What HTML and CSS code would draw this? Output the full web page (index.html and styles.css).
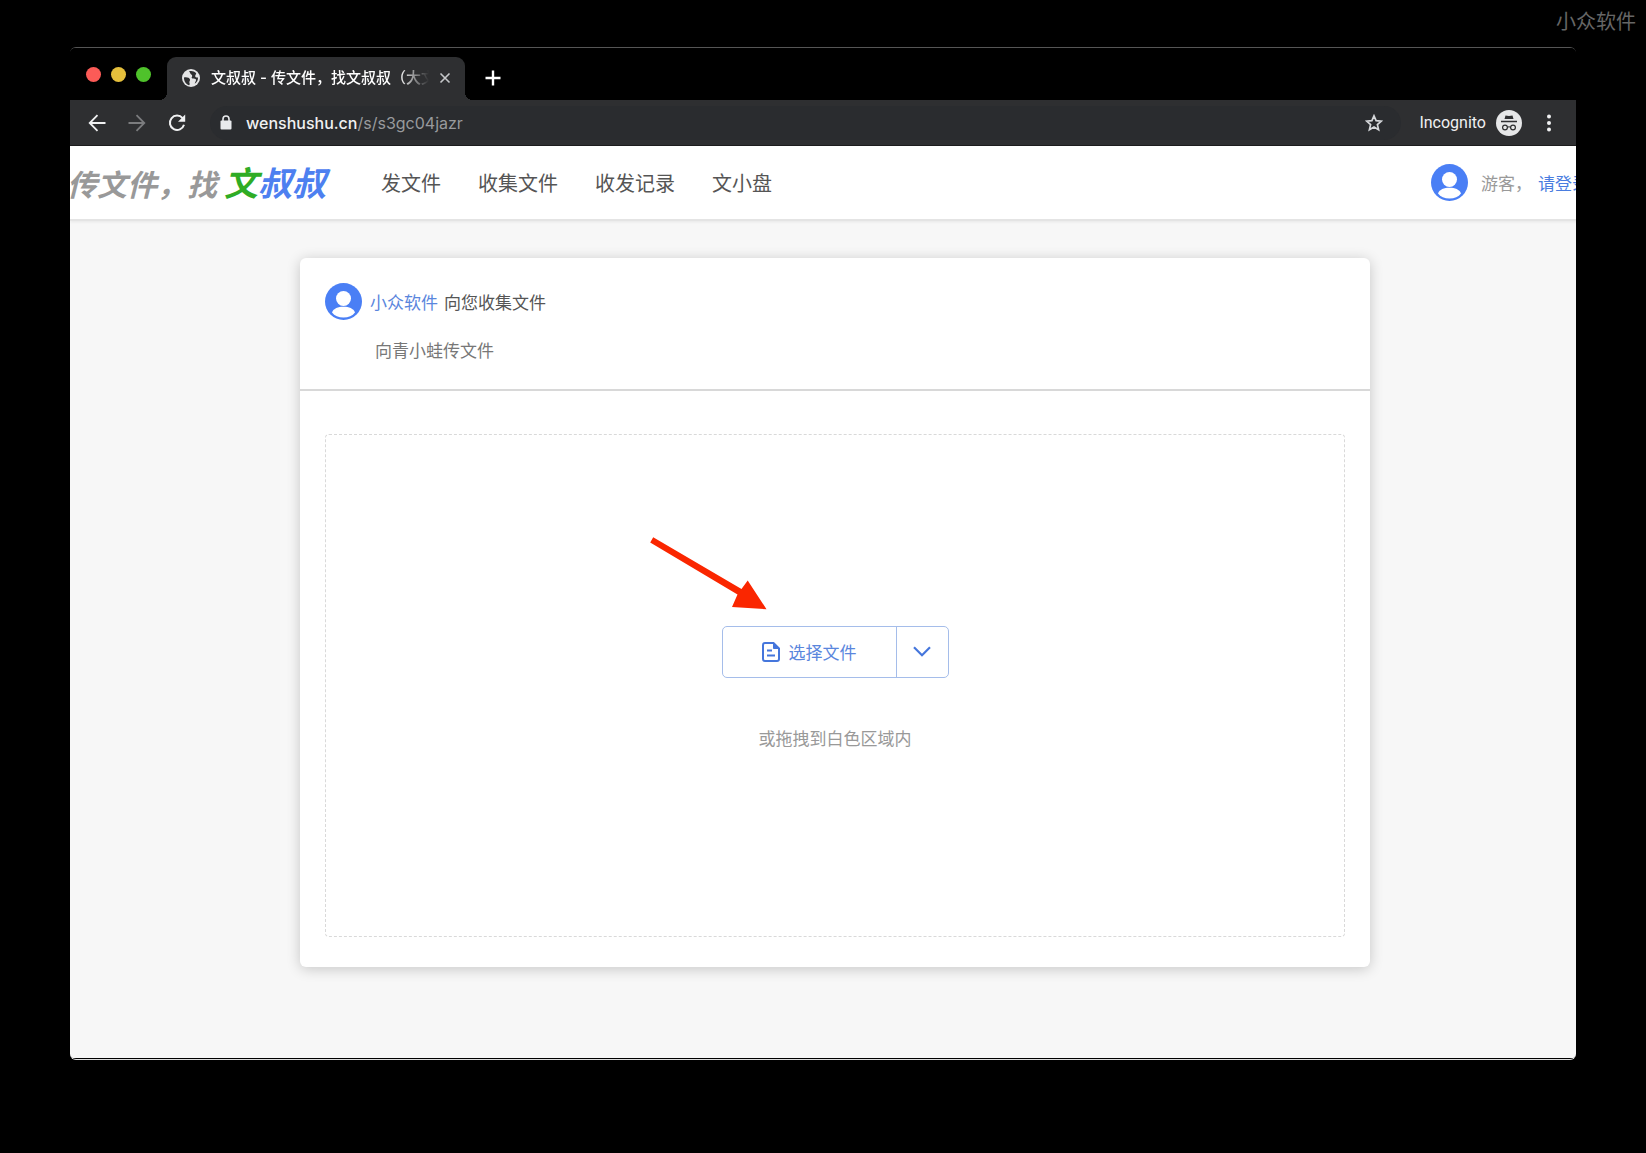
FILE: index.html
```html
<!DOCTYPE html>
<html lang="zh-CN">
<head>
<meta charset="utf-8">
<meta name="viewport" content="width=device-width, initial-scale=1">
<title>文叔叔 - 传文件，找文叔叔</title>
<link rel="stylesheet" href="styles.css">
</head>
<body>
<svg width="0" height="0" class="defs" aria-hidden="true">
  <symbol id="avatar" viewBox="0 0 37 37">
    <circle cx="18.500" cy="18.500" r="18.500" fill="#4a7ff5"/>
    <circle cx="18.500" cy="15.500" r="7.500" fill="#fff"/>
    <path d="M7 29.500C8.500 25.500 13 23.800 18.500 23.800S28.500 25.500 30 29.500C27.500 32.800 23.500 34.500 18.500 34.500S9.500 32.800 7 29.500Z" fill="#fff"/>
  </symbol>
</svg>
<div class="watermark">小众软件</div>
<div class="window">
  <div class="tabstrip">
    <div class="lights"><i class="light red"></i><i class="light yellow"></i><i class="light green"></i></div>
    <div class="tab">
      <svg width="18" height="18" viewBox="0 0 18 18"><circle cx="9" cy="9" r="9" fill="#e4e5e6"/><path d="M2 8.500C4.500 8 7.500 8.500 8 10.500C8.300 12 6.800 12.500 7.500 14C8 15 7.500 16 7 16.200C3.800 15.200 1.800 12.200 2 8.500ZM7 2.300C8.500 3.500 8 4.700 9 5.300C10.500 6 10.500 7.500 9.500 8.500C10.500 10.300 12.500 9.200 13.800 10.300C14.800 11.200 13.200 12.500 12.700 14.800C15 13.500 16.200 11 16 8.500C15 8.800 13.500 8.500 13.200 7.200C13 6 14.200 5.200 14.200 4.200C12.300 2.200 9.500 1.600 7 2.300Z" fill="#2e2f31"/></svg>
      <span class="tab-title">文叔叔 - 传文件，找文叔叔（大文</span>
      <button class="icon-btn" aria-label="关闭标签页"><svg width="12" height="12" viewBox="0 0 12 12" fill="none" stroke="#c5c7c9" stroke-width="1.600"><path d="M1.500 1.500L10.500 10.500M10.500 1.500L1.500 10.500"/></svg></button>
    </div>
    <button class="icon-btn" aria-label="新标签页"><svg width="16" height="16" viewBox="0 0 16 16" fill="none" stroke="#fff" stroke-width="2.400"><path d="M8 0.500V15.500M0.500 8H15.500"/></svg></button>
  </div>
  <div class="toolbar">
    <div class="history">
      <button class="icon-btn" aria-label="后退"><svg width="18" height="18" viewBox="0 0 18 18" fill="none" stroke="#f0f1f2" stroke-width="1.800"><path d="M17.500 9H2M9.500 1.200L1.700 9L9.500 16.800"/></svg></button>
      <button class="icon-btn" aria-label="前进"><svg width="18" height="18" viewBox="0 0 18 18" fill="none" stroke="#7b7c7e" stroke-width="1.800"><path d="M0.500 9H16M8.500 1.200L16.300 9L8.500 16.800"/></svg></button>
      <button class="icon-btn" aria-label="重新加载"><svg width="18" height="18" viewBox="0 0 18 18"><path d="M14.600 4.200A7.200 7.200 0 1 0 16 10.800" fill="none" stroke="#f0f1f2" stroke-width="2"/><path d="M17.200 0.600V7.800H10Z" fill="#f0f1f2"/></svg></button>
    </div>
    <div class="address">
      <svg width="12" height="15" viewBox="0 0 12 15"><path d="M3 6V4A3 3 0 0 1 9 4V6" fill="none" stroke="#e8eaed" stroke-width="1.600"/><rect x="0.500" y="5.500" width="11" height="9" rx="1" fill="#e8eaed"/></svg>
      <span class="url"><span class="domain">wenshushu.cn</span>/s/s3gc04jazr</span>
      <button class="icon-btn" aria-label="添加书签"><svg width="18" height="18" viewBox="0 0 18 18" fill="none" stroke="#d5d7da" stroke-width="1.700"><path d="M9 1.800L11.100 6.600L16.400 7.100L12.400 10.600L13.600 15.800L9 13L4.400 15.800L5.600 10.600L1.600 7.100L6.900 6.600Z"/></svg></button>
    </div>
    <div class="incognito">
      <span>Incognito</span>
      <svg width="26" height="26" viewBox="0 0 26 26"><circle cx="13" cy="13" r="13" fill="#e6e7e8"/><path d="M9.500 5.500L13 6L16.500 5.500L17.500 9H8.500Z" fill="#2e2f31"/><path d="M5 11.500H21" stroke="#2e2f31" stroke-width="1.500"/><g fill="none" stroke="#2e2f31" stroke-width="1.200"><circle cx="9" cy="17.500" r="2.400"/><circle cx="17" cy="17.500" r="2.400"/><path d="M11.400 17.200Q13 16.300 14.600 17.200"/></g></svg>
    </div>
    <button class="icon-btn" aria-label="菜单"><svg width="4" height="18" viewBox="0 0 4 18" fill="#f0f1f2"><circle cx="2" cy="2.500" r="2"/><circle cx="2" cy="9" r="2"/><circle cx="2" cy="15.500" r="2"/></svg></button>
  </div>
  <div class="viewport">
    <div class="page">
      <header class="site-header">
        <a class="logo" href="#"><span class="slogan">传文件，找</span><span class="brand"><span class="brand-green">文</span>叔叔</span></a>
        <nav class="nav"><a href="#">发文件</a><a href="#">收集文件</a><a href="#">收发记录</a><a href="#">文小盘</a></nav>
        <div class="user">
          <svg width="37" height="37"><use href="#avatar"/></svg>
          <span class="guest">游客，</span><a class="login" href="#">请登录</a>
        </div>
      </header>
      <main class="main">
        <section class="card">
          <div class="card-head">
            <div class="sender"><svg width="37" height="37"><use href="#avatar"/></svg><p><a href="#">小众软件</a><span>向您收集文件</span></p></div>
            <p class="note">向青小蛙传文件</p>
          </div>
          <div class="card-body">
            <div class="dropzone">
              <div class="picker">
                <button class="pick"><svg width="18" height="20" viewBox="0 0 18 20" fill="none" stroke="#4576dc" stroke-width="2"><path d="M3 1H11.500L17 6.500V17A2 2 0 0 1 15 19H3A2 2 0 0 1 1 17V3A2 2 0 0 1 3 1Z"/><path d="M11.500 1V6.500H17Z" fill="#4576dc" stroke-width="1"/><path d="M5 8.500H10M5 13.500H13"/></svg>选择文件</button>
                <button class="more" aria-label="更多方式"><svg width="18" height="11" viewBox="0 0 18 11" fill="none" stroke="#4576dc" stroke-width="2.200"><path d="M1 1.200L9 9.200L17 1.200"/></svg></button>
                <svg class="arrow" width="120" height="76" viewBox="0 0 120 76" fill="#fa2600"><path d="M3.200 1.300L91.500 53L97.700 44.500L116.500 73.200L82 71L87.500 58.500L0.200 6.500Z"/></svg>
              </div>
              <p class="hint">或拖拽到白色区域内</p>
            </div>
          </div>
        </section>
      </main>
    </div>
  </div>
</div>
</body>
</html>
```
FILE: styles.css
```css
* { box-sizing: border-box; }

body {
  display: flex;
  flex-direction: column;
  min-height: 100vh;
  margin: 0;
  padding-bottom: 93px;
  background: #000;
  color: #555;
  font-family: "Noto Sans CJK SC", sans-serif;
  font-size: 17px;
  line-height: 24px;
}

p { margin: 0; }
a { color: inherit; text-decoration: none; }
svg { display: block; flex: none; }
.defs { position: absolute; }

button {
  padding: 0;
  border: 0;
  background: none;
  color: inherit;
  font: inherit;
  cursor: pointer;
}

.icon-btn {
  display: flex;
  flex: none;
}

.watermark {
  height: 47px;
  padding: 9px 10px 0;
  color: #666;
  font-size: 20px;
  text-align: right;
}

/* Browser window */
.window {
  display: flex;
  flex: 1;
  flex-direction: column;
  margin: 0 70px;
  overflow: hidden;
  border-top: 1px solid #555;
  border-bottom: 1px solid #ddd;
  border-radius: 6px;
}

.tabstrip {
  display: flex;
  align-items: flex-end;
  height: 52px;
  padding-left: 16px;
  background: #000;
}

.tabstrip > .icon-btn { margin: 0 0 14px 20px; }

.lights {
  display: flex;
  gap: 10px;
  margin: 0 16px 18px 0;
}

.light {
  width: 15px;
  height: 15px;
  border-radius: 50%;
}

.red { background: #fc5b57; }
.yellow { background: #e5bf3c; }
.green { background: #4fc22b; }

.tab {
  position: relative;
  display: flex;
  align-items: center;
  width: 298px;
  height: 43px;
  padding: 0 14px 2px 15px;
  border-radius: 9px 9px 0 0;
  background: #2e2f31;
}

.tab::before,
.tab::after {
  position: absolute;
  bottom: 0;
  width: 8px;
  height: 8px;
  content: "";
}

.tab::before {
  right: 100%;
  background: radial-gradient(circle at 0 0, #000 8px, #2e2f31 8px);
}

.tab::after {
  left: 100%;
  background: radial-gradient(circle at 100% 0, #000 8px, #2e2f31 8px);
}

.tab-title {
  flex: 1;
  margin: 0 10px 0 11px;
  overflow: hidden;
  color: #fff;
  font-family: Inter, "Noto Sans CJK SC", sans-serif;
  font-size: 15px;
  font-weight: 500;
  white-space: nowrap;
  -webkit-mask-image: linear-gradient(to right, #000 86%, transparent);
  mask-image: linear-gradient(to right, #000 86%, transparent);
}

.toolbar {
  display: flex;
  align-items: center;
  height: 46px;
  padding-right: 25px;
  border-bottom: 1px solid #1c1c1d;
  background: #2e2f31;
  color: #f0f1f2;
  font-family: Inter, sans-serif;
  font-size: 16px;
}

.history {
  display: flex;
  gap: 22px;
  padding: 0 24px 0 18px;
}

.address {
  display: flex;
  flex: 1;
  align-items: center;
  height: 34px;
  padding: 0 18px 0 10px;
  border-radius: 17px;
  background: #2a2c2f;
}

.url {
  flex: 1;
  margin-left: 14px;
  color: #989a9d;
  font-size: 16px;
}

.domain {
  color: #f0f1f2;
  font-weight: 500;
}

.incognito {
  display: flex;
  align-items: center;
  gap: 10px;
  margin: 0 25px 0 18px;
  font-family: Roboto, sans-serif;
}

/* The page is laid out wider than the window and runs off its right edge */
.viewport {
  flex: 1;
  overflow: hidden;
  border-bottom: 1px solid #000;
  background: #f7f7f7;
}

.page { width: calc(100% + 24px); }

.site-header {
  display: flex;
  align-items: center;
  height: 75px;
  padding-right: 11px;
  border-bottom: 2px solid #e4e4e4;
  background: #fff;
  box-shadow: 0 1px 3px #0001;
}

.logo {
  display: flex;
  align-items: baseline;
  gap: 7px;
  margin-left: -3px;
  font-style: italic;
  font-weight: 700;
  line-height: 40px;
  white-space: nowrap;
}

.slogan {
  color: #999;
  font-size: 30px;
}

.brand {
  color: #4d80f0;
  font-size: 34px;
}

.brand-green { color: #2fac25; }

.nav {
  display: flex;
  flex: 1;
  gap: 37px;
  margin-left: 55px;
  font-size: 20px;
  white-space: nowrap;
}

.user {
  display: flex;
  align-items: center;
  white-space: nowrap;
}

.guest {
  margin: 0 6px 0 13px;
  color: #999;
}

.login { color: #4a7de0; }

.main { padding: 37px 24px 91px; }

.card {
  max-width: 1070px;
  margin: 0 auto;
  border-radius: 6px;
  background: #fff;
  box-shadow: 0 2px 14px #0003;
}

.card-head {
  padding: 25px 25px 26px;
  border-bottom: 2px solid #d8d8d8;
}

.sender {
  display: flex;
  align-items: center;
  gap: 8px;
}

.sender p {
  display: flex;
  gap: 6px;
}

.sender a { color: #5a86dd; }

.note {
  margin: 18px 0 1px 50px;
  color: #777;
}

.card-body { padding: 43px 25px 30px; }

.dropzone {
  display: flex;
  flex-direction: column;
  align-items: center;
  justify-content: center;
  gap: 48px;
  min-height: 503px;
  padding-top: 4px;
  border: 1px dashed #d9d9d9;
  border-radius: 4px;
}

.picker {
  position: relative;
  display: flex;
  border: 1px solid #a5bdea;
  border-radius: 5px;
  color: #5a86dd;
}

.pick {
  display: flex;
  align-items: center;
  gap: 9px;
  height: 50px;
  padding: 0 39px;
}

.more {
  display: flex;
  align-items: center;
  justify-content: center;
  width: 52px;
  border-left: 1px solid #a5bdea;
}

/* Callout arrow laid over the drop zone */
.arrow {
  position: absolute;
  top: -91px;
  left: -73px;
  pointer-events: none;
}

.hint { color: #999; }
```
